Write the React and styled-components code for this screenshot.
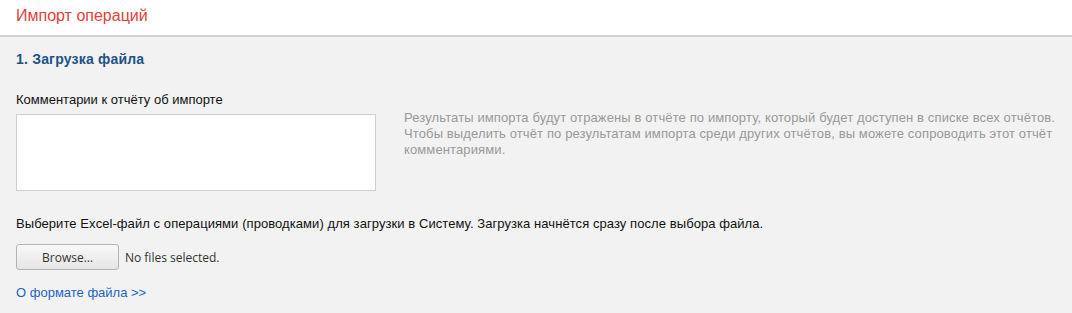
import React from 'react';
import styled, { createGlobalStyle } from 'styled-components';

const GlobalStyle = createGlobalStyle`
  html, body {
    margin: 0;
    padding: 0;
    background: #f2f2f2;
    font-family: "Liberation Sans", Arial, sans-serif;
    font-size: 13px;
    color: #222;
  }
`;

const Header = styled.header`
  background: #fff;
  height: 37px;
  border-bottom: 2px solid #d2d2d2;
  box-sizing: border-box;
  padding: 7px 16px 0;
`;

const Title = styled.h1`
  margin: 0;
  font-size: 16px;
  font-weight: normal;
  color: #e2403a;
`;

const Section = styled.section`
  padding: 14px 16px 0;
`;

const SectionTitle = styled.h2`
  margin: 0;
  font-size: 14px;
  font-weight: bold;
  color: #1d5288;
  line-height: 16px;
  letter-spacing: 0.2px;
`;

const CommentRow = styled.div`
  display: flex;
  gap: 28px;
  margin-top: 25px;
`;

const Field = styled.div`
  display: flex;
  flex-direction: column;
`;

const Label = styled.label`
  font-size: 13px;
  line-height: 16px;
  color: #111;
  margin-bottom: 6px;
`;

const CommentBox = styled.textarea`
  width: 360px;
  height: 77px;
  box-sizing: border-box;
  border: 1px solid #cfcfcf;
  background: #fff;
  resize: none;
  margin: 0;
  font-family: inherit;
`;

const Hint = styled.p`
  margin: 18px 0 0;
  color: #999;
  font-size: 13px;
  line-height: 16px;
  letter-spacing: 0.12px;
  width: 665px;
`;

const Instruction = styled.p`
  margin: 25px 0 0;
  line-height: 16px;
  color: #111;
  letter-spacing: 0.07px;
`;

const FileRow = styled.div`
  display: flex;
  align-items: center;
  gap: 6px;
  margin-top: 12px;
`;

const BrowseButton = styled.button`
  width: 103px;
  height: 26px;
  box-sizing: border-box;
  border: 1px solid #b4b4b4;
  border-radius: 3px;
  background: linear-gradient(#f8f8f8, #e6e6e6);
  font-family: "Open Sans", "DejaVu Sans", sans-serif;
  font-size: 12px;
  color: #333;
  padding: 0;
`;

const FileStatus = styled.span`
  font-family: "Open Sans", "DejaVu Sans", sans-serif;
  font-size: 12px;
  color: #333;
`;

const FormatLink = styled.a`
  display: inline-block;
  margin-top: 15px;
  color: #1f63c6;
  text-decoration: none;
  line-height: 16px;
`;

export default function App() {
  return (
    <>
      <GlobalStyle />
      <Header>
        <Title>Импорт операций</Title>
      </Header>
      <Section>
        <SectionTitle>1. Загрузка файла</SectionTitle>
        <CommentRow>
          <Field>
            <Label>Комментарии к отчёту об импорте</Label>
            <CommentBox />
          </Field>
          <Hint>
            Результаты импорта будут отражены в отчёте по импорту, который будет доступен в списке всех отчётов.
            Чтобы выделить отчёт по результатам импорта среди других отчётов, вы можете сопроводить этот отчёт
            комментариями.
          </Hint>
        </CommentRow>
        <Instruction>
          Выберите Excel-файл с операциями (проводками) для загрузки в Систему. Загрузка начнётся сразу после выбора файла.
        </Instruction>
        <FileRow>
          <BrowseButton>Browse…</BrowseButton>
          <FileStatus>No files selected.</FileStatus>
        </FileRow>
        <FormatLink href="#">О формате файла &gt;&gt;</FormatLink>
      </Section>
    </>
  );
}
